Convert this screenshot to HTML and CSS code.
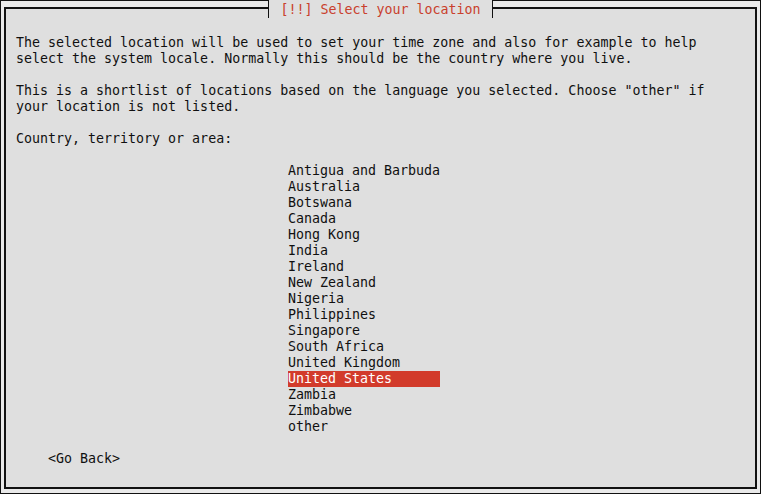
FILE: index.html
```html
<!DOCTYPE html>
<html lang="en">
<head>
<meta charset="UTF-8">
<title>[!!] Select your location</title>
<link rel="stylesheet" href="styles.css">
</head>
<body>
<div class="screen">
	<div class="dialog">
		<div class="title-row"><span class="title">[!!] Select your location</span></div>
		<div class="body">
			<p>The selected location will be used to set your time zone and also for example to help<br>select the system locale. Normally this should be the country where you live.</p>
			<p>This is a shortlist of locations based on the language you selected. Choose "other" if<br>your location is not listed.</p>
			<p>Country, territory or area:</p>
			<ul class="choices">
				<li>Antigua and Barbuda</li>
				<li>Australia</li>
				<li>Botswana</li>
				<li>Canada</li>
				<li>Hong Kong</li>
				<li>India</li>
				<li>Ireland</li>
				<li>New Zealand</li>
				<li>Nigeria</li>
				<li>Philippines</li>
				<li>Singapore</li>
				<li>South Africa</li>
				<li>United Kingdom</li>
				<li class="selected">United States</li>
				<li>Zambia</li>
				<li>Zimbabwe</li>
				<li>other</li>
			</ul>
			<div class="buttons"><span class="button">&lt;Go Back&gt;</span></div>
		</div>
	</div>
</div>
</body>
</html>
```

FILE: styles.css
```css
:root {
	--cell: 8px;
	--row: 16px;
	--bg: #dfdfdf;
	--frame-bg: #e9e9e9;
	--ink: #101010;
	--red: #d23b2b;
}
html, body {
	margin: 0;
	padding: 0;
}
body {
	width: 761px;
	height: 494px;
	overflow: hidden;
	background: var(--frame-bg);
	font-family: "DejaVu Sans Mono", "Liberation Mono", monospace;
	font-size: 13.3px;
	line-height: var(--row);
	color: var(--ink);
}

.screen {
	box-sizing: border-box;
	width: 761px;
	height: 494px;
	border: 1px solid #111;
	padding: 6px 3px 4px 3px;
}
.dialog {
	box-sizing: border-box;
	height: 482px;
	border: 2px solid #111;
	background: var(--bg);
	padding: 0 10px;
}

.title-row {
	display: flex;
	justify-content: center;
	margin-top: -9px;
}
.title {
	background: var(--bg);
	color: #c9402d;
	padding: 2px 11px 0;
	border-left: 1px solid #111;
	border-right: 1px solid #111;
	white-space: pre;
}

.body {
	padding-top: 17px;
}
.body p {
	margin: 0 0 var(--row);
	white-space: pre;
}
.choices {
	list-style: none;
	margin: var(--row) 0 var(--row) calc(var(--cell) * 34);
	padding: 0;
	width: calc(var(--cell) * 19);
}
.choices li {
	height: var(--row);
	white-space: pre;
}
.choices .selected {
	background: var(--red);
	color: #fff;
}
.buttons {
	padding-left: calc(var(--cell) * 4);
}
```
